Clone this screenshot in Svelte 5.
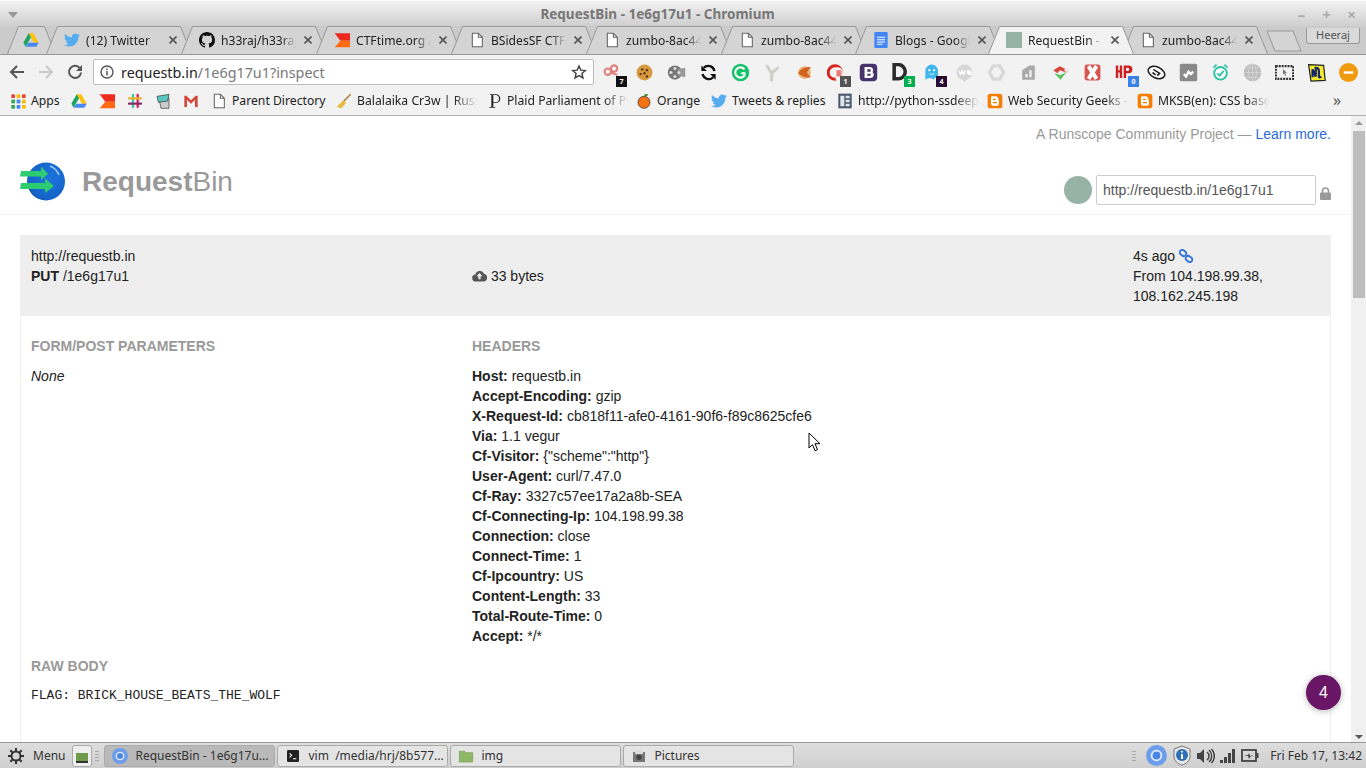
<script lang="ts">
  const twitter = '<path fill="#55acee" d="M23.95 4.57a10 10 0 01-2.82.77 4.96 4.96 0 002.16-2.72c-.95.55-2 .96-3.13 1.18a4.92 4.92 0 00-8.38 4.48C7.69 8.1 4.07 6.13 1.64 3.16a4.92 4.92 0 001.52 6.57 4.9 4.9 0 01-2.23-.61v.06a4.92 4.92 0 003.95 4.83 4.9 4.9 0 01-2.22.08 4.93 4.93 0 004.6 3.42A9.87 9.87 0 010 19.54a13.94 13.94 0 007.55 2.21c9.06 0 14-7.5 14-14 0-.21 0-.42-.02-.63a10 10 0 002.46-2.55z"/>';
  const github = '<path transform="scale(1.5)" fill="#111" d="M8 0C3.58 0 0 3.58 0 8c0 3.54 2.29 6.53 5.47 7.59.4.07.55-.17.55-.38 0-.19-.01-.82-.01-1.49-2.01.37-2.53-.49-2.69-.94-.09-.23-.48-.94-.82-1.13-.28-.15-.68-.52-.01-.53.63-.01 1.08.58 1.23.82.72 1.21 1.87.87 2.33.66.07-.52.28-.87.51-1.07-1.78-.2-3.64-.89-3.64-3.95 0-.87.31-1.59.82-2.15-.08-.2-.36-1.02.08-2.12 0 0 .67-.21 2.2.82.64-.18 1.32-.27 2-.27s1.36.09 2 .27c1.53-1.04 2.2-.82 2.2-.82.44 1.1.16 1.92.08 2.12.51.56.82 1.27.82 2.15 0 3.07-1.87 3.75-3.65 3.95.29.25.54.73.54 1.48 0 1.07-.01 1.93-.01 2.2 0 .21.15.46.55.38A8.01 8.01 0 0016 8c0-4.42-3.58-8-8-8z"/>';
  const drive = '<path fill="#ffc107" d="M8.5 2h7l8 14h-7z"/><path fill="#1fa463" d="M8.5 2l3.5 6-8 14-3.5-6z"/><path fill="#4688f4" d="M8 16h15.500l-3.500 6H4z"/>';
  const ctf = '<path fill="#ee2a1e" d="M1 2h23v11H9.500z"/><path fill="#ff6a13" d="M1 23h23V13H9.500z"/>';
  const doc = '<path fill="#fff" stroke="#666" stroke-width="1.600" d="M5 2h9l6 6v14H5z"/><path fill="none" stroke="#666" stroke-width="1.600" d="M14 2v6h6"/>';
  const gdoc = '<rect x="2" width="20" height="24" rx="1.500" fill="#4285f4"/><path stroke="#fff" stroke-width="1.600" d="M6 8h12M6 11.500h12M6 15h12M6 18.500h8"/>';
  const bin = '<rect width="24" height="24" fill="#97b3a8"/>';

  const tabs = [
    { title: '', icon: drive },
    { title: '(12) Twitter', icon: twitter },
    { title: 'h33raj/h33raj', icon: github },
    { title: 'CTFtime.org / BSides', icon: ctf },
    { title: 'BSidesSF CTF', icon: doc },
    { title: 'zumbo-8ac445b', icon: doc },
    { title: 'zumbo-8ac445b', icon: doc },
    { title: 'Blogs - Google', icon: gdoc, tight: true },
    { title: 'RequestBin - 1e', icon: bin, active: true },
    { title: 'zumbo-8ac445b', icon: doc, tight: true },
  ];

  const appColors = ['#ea4335', '#fbbc05', '#ea4335', '#34a853', '#4285f4', '#fbbc05', '#34a853', '#4285f4', '#fbbc05'];
  const apps = appColors
    .map((c, i) => `<rect x="${2 + (i % 3) * 8}" y="${2 + Math.floor(i / 3) * 8}" width="5.500" height="5.500" fill="${c}"/>`)
    .join('');
  const slack = '<path stroke-width="3.400" stroke-linecap="round" d="M9 3v18" stroke="#36c5ab"/><path stroke-width="3.400" stroke-linecap="round" d="M16 3v18" stroke="#e01e5a"/><path stroke-width="3.400" stroke-linecap="round" d="M3 8h18" stroke="#ecb22e"/><path stroke-width="3.400" stroke-linecap="round" d="M3 16h18" stroke="#8a2a6a"/>';
  const book = '<path fill="#ccc" stroke="#333" d="M6 8h15v15H9z"/><path fill="#5cc5c0" stroke="#333" d="M3 5l18-3-2 10-14 2z"/>';
  const gmail = '<path fill="#d44638" d="M2 4h3l7 7 7-7h3v17h-4V10l-6 6-6-6v11H2z"/>';
  const broom = '<path stroke="#a5752a" stroke-width="2" d="M22 2L10 14"/><path fill="#e8b93c" d="M11 11l4 4-7 8-7-2z"/>';
  const plaid = '<path fill="#222" d="M6 2h9a6 6 0 010 13h-4v6h3v1H5v-1h3V3H6zm5 1v11h3a5 5 0 000-11z"/>';
  const orange = '<circle cx="12" cy="14" r="9" fill="#f47216" stroke="#222"/><path fill="#3a8a2a" d="M12 5c0-3 3-4 6-3-1 3-3 4-6 3z"/>';
  const python = '<rect x="2" y="1" width="20" height="22" fill="#46586a"/><path fill="#dfe6ea" d="M5 4h6v16H5zM13 4h6v4h-6zM13 10h6v4h-6zM13 16h6v4h-6z"/>';
  const blogger = '<rect x="1" y="1" width="22" height="22" rx="4" fill="#f57d00"/><path fill="#fff" d="M8 5h5a4 4 0 014 4v1a1 1 0 001 1v5a3 3 0 01-3 3H9a3 3 0 01-3-3V7a2 2 0 012-2z"/><path stroke="#f57d00" stroke-width="2" d="M9 9.500h4M9 14.500h6"/>';

  const bookmarks = [
    { icon: apps, label: 'Apps', width: 61 },
    { icon: drive, label: '', width: 28 },
    { icon: ctf, label: '', width: 28 },
    { icon: slack, label: '', width: 28 },
    { icon: book, label: '', width: 28 },
    { icon: gmail, label: '', width: 28 },
    { icon: doc, label: 'Parent Directory', width: 125 },
    { icon: broom, label: 'Balalaika Cr3w | Russian', width: 150, fade: true },
    { icon: plaid, label: 'Plaid Parliament of Pwning', width: 150, fade: true },
    { icon: orange, label: 'Orange', width: 75 },
    { icon: twitter, label: 'Tweets & replies', width: 126 },
    { icon: python, label: 'http://python-ssdeep', width: 150, fade: true },
    { icon: blogger, label: 'Web Security Geeks - Blog', width: 150, fade: true },
    { icon: blogger, label: 'MKSB(en): CSS based', width: 140, fade: true },
  ];

  const extensions = [
    { svg: '<circle cx="14" cy="7" r="4" fill="none" stroke="#e07f7c" stroke-width="2.600"/><circle cx="6" cy="11" r="4" fill="none" stroke="#e07f7c" stroke-width="2.600"/><path stroke="#e07f7c" stroke-width="2.600" d="M10 12l8 3"/>', badge: '7', bg: '#111' },
    { svg: '<circle cx="12" cy="12" r="10" fill="#d9993f"/><circle cx="9" cy="8" r="1.500" fill="#5a3313"/><circle cx="15" cy="9" r="1.500" fill="#5a3313"/><circle cx="7" cy="14" r="1.500" fill="#5a3313"/><circle cx="12" cy="13" r="1.500" fill="#5a3313"/><circle cx="15" cy="17" r="1.500" fill="#5a3313"/>' },
    { svg: '<circle cx="10" cy="12" r="9" fill="#777"/><path fill="#999" d="M14 8l9-2v12l-9-2z"/><circle cx="10" cy="7" r="2" fill="#ddd"/><circle cx="5" cy="12" r="2" fill="#ddd"/><circle cx="15" cy="12" r="2" fill="#ddd"/><circle cx="10" cy="17" r="2" fill="#ddd"/>' },
    { svg: '<path fill="none" stroke="#111" stroke-width="3" d="M19.500 10a8 8 0 00-13.500-4M4.500 14a8 8 0 0013.500 4"/><path fill="#111" d="M3 3v7h7zM21 21v-7h-7z"/>' },
    { svg: '<circle cx="12" cy="12" r="11" fill="#15c26b"/><path fill="none" stroke="#fff" stroke-width="2.600" d="M17 8a6.500 6.500 0 100 8v-3h-4"/>' },
    { svg: '<path fill="#cfcfc8" d="M3 3l3-1 5 8 8-6 2 2-8 8v9h-4v-9z"/>' },
    { svg: '<circle cx="12" cy="12" r="8" fill="#eeb27a"/><path fill="#d0641f" d="M4 13c3-6 9-8 16-8l-5 7 5 6c-6 1-12-1-16-5z"/>' },
    { svg: '<circle cx="10" cy="12" r="8.500" fill="none" stroke="#d9231f" stroke-width="3.800"/><path fill="#f4f4f4" d="M11 6c4-2 9 1 9 6v10h-9z"/><path fill="#e77" d="M12 9h6v8h-6z"/>', badge: '1', bg: '#555' },
    { svg: '<rect x="1" y="1" width="22" height="22" rx="5" fill="#46336b"/><path fill="#fff" fill-rule="evenodd" d="M7 5h7a4 4 0 013 6.500A4.200 4.200 0 0114 19H7zm3.500 3v3h3a1.500 1.500 0 000-3zm0 5.500V16h3.500a1.300 1.300 0 000-2.500z"/>' },
    { svg: '<path fill="none" stroke="#2b2b2b" stroke-width="4.500" d="M4 2h5a9 9 0 010 18H4z"/>', badge: '3', bg: '#00b050' },
    { svg: '<path fill="#3fb6ec" d="M3 21V10a8 8 0 0116 0v8c-2 0-4 1-6 3-1-1-2-2-4-2s-4 1-6 2z"/><circle cx="8" cy="9" r="1.400" fill="#fff"/><circle cx="14" cy="9" r="1.400" fill="#fff"/><path stroke="#fff" fill="none" d="M8 13c2 2 4 2 6 0"/>', badge: '4', bg: '#2a0a33' },
    { svg: '<path fill="#d6d6d6" d="M12 2a10 10 0 0110 10 10 10 0 01-7 9l-3 3-3-3a10 10 0 01-7-9A10 10 0 0112 2z"/><path stroke="#fff" stroke-width="2" fill="none" d="M5 10l2 4 2-4 2 4 2-4M20 10h-4v2h4v2h-4"/>' },
    { svg: '<path fill="none" stroke="#d8d8d8" stroke-width="4" d="M8 3.500h8l5 8.500-5 8.500H8L3 12z"/>' },
    { svg: '<path fill="#aaa" d="M4 9l9-6h7v18H4z"/><path fill="#f2f2f2" d="M8 14h3v4H8zM13 9h3v9h-3z"/>' },
    { svg: '<path fill="#5cc464" d="M4 13l8 2 8-4-8 10z"/><path fill="#d9453d" d="M3 9l8-5 11 5-3 3-8-3-3 4z"/><circle cx="19" cy="9" r="2" fill="#f2f2f2"/>' },
    { svg: '<rect x="2" y="2" width="20" height="20" rx="3" fill="#d9534f"/><path stroke="#fff" stroke-width="5" d="M7 4l10 16M17 4L7 20"/>' },
    { svg: '<path fill="#cc1f1f" d="M1 3h3v6h2V3h3v16H6v-7H4v7H1zM11 3h6a4.500 4.500 0 010 10h-3v6h-3zm3 3v4h2a2 2 0 000-4z"/>', badge: '0', bg: '#3b82e8' },
    { svg: '<ellipse cx="12" cy="12" rx="11" ry="7" fill="#fff" stroke="#222" stroke-width="2" transform="rotate(25 12 12)"/><path stroke="#222" stroke-width="2" fill="none" d="M8 8l8 5-3 3M7 12l4 3"/>' },
    { svg: '<rect x="1" y="1" width="22" height="22" rx="2" fill="#8a8a8a"/><path fill="none" stroke="#fff" stroke-width="3" d="M6 14l3 3 3-6 3 3 3-3"/>' },
    { svg: '<circle cx="12" cy="13" r="8" fill="#fff" stroke="#2cc3a5" stroke-width="2.400"/><path stroke="#2cc3a5" stroke-width="2.200" fill="none" d="M8 13l3 3 5-6M3 6l4-4M21 6l-4-4"/>' },
    { svg: '<circle cx="12" cy="12" r="11" fill="#bcbcbc"/><path stroke="#d8d8d8" fill="none" d="M1 12h22M12 1v22M4 6h16M4 18h16"/><ellipse cx="12" cy="12" rx="5" ry="11" fill="none" stroke="#d8d8d8"/>' },
    { svg: '<rect x="1" y="4" width="22" height="16" fill="#f2f2f2" stroke="#333" stroke-width="2.800" stroke-dasharray="2.500 1.200"/><path fill="#777" d="M10 8l5 4-2 .500 1 3-1.500.500-1-3-1.500 1.500z"/>' },
    { svg: '<path fill="#f5ea2e" stroke="#222" stroke-width="1.500" d="M2 2l19 1 2 19-18 1z"/><path fill="none" stroke="#14276b" stroke-width="2.800" d="M7 18V8l4 9V6c2 0 4 1 4 4v7c0 2 2 1 3 0"/>' },
    { svg: '<circle cx="12" cy="12" r="12" fill="#f09a0e"/><rect x="6" y="10.500" width="12" height="3" fill="#fff"/>' },
  ];

  const headers: [string, string][] = [
    ['Host', 'requestb.in'],
    ['Accept-Encoding', 'gzip'],
    ['X-Request-Id', 'cb818f11-afe0-4161-90f6-f89c8625cfe6'],
    ['Via', '1.1 vegur'],
    ['Cf-Visitor', '{"scheme":"http"}'],
    ['User-Agent', 'curl/7.47.0'],
    ['Cf-Ray', '3327c57ee17a2a8b-SEA'],
    ['Cf-Connecting-Ip', '104.198.99.38'],
    ['Connection', 'close'],
    ['Connect-Time', '1'],
    ['Cf-Ipcountry', 'US'],
    ['Content-Length', '33'],
    ['Total-Route-Time', '0'],
    ['Accept', '*/*'],
  ];

  const chromium = '<circle cx="12" cy="12" r="12" fill="#6d9eeb"/><circle cx="12" cy="12" r="6.500" fill="#e8f0fe"/><circle cx="12" cy="12" r="4.500" fill="#4a86e8"/>';
  const windows = [
    { label: 'RequestBin - 1e6g17u...', icon: chromium, active: true },
    { label: 'vim  /media/hrj/8b577...', icon: '<rect x="3" y="3" width="18" height="18" rx="2" fill="#222"/><path stroke="#fff" stroke-width="1.600" fill="none" d="M7 8l3 3-3 3M12 16h5"/>' },
    { label: 'img', icon: '<path fill="#8fb866" stroke="#7a9a58" d="M2 5h8l2 2h10v14H2z"/>' },
    { label: 'Pictures', icon: '<rect x="3" y="6" width="18" height="15" fill="#777"/><rect x="6" y="3" width="12" height="6" fill="#ddd"/><circle cx="12" cy="14" r="4" fill="#444"/>' },
  ];
</script>

<div class="desktop">
  <header class="titlebar">
    <span class="menu-caret"></span>
    <span class="title">RequestBin - 1e6g17u1 - Chromium</span>
    <div class="win-controls"><span>–</span><span>+</span><span>×</span></div>
  </header>

  <div class="tabstrip">
    {#each tabs as tab, i}
      {@const w = i === 0 ? 49 : 146}
      <div class="tab" class:active={tab.active} class:tight={tab.tight} class:first={i === 0}>
        <svg class="tab-bg" width={w} height="28" viewBox="0 0 {w} 28">
          <path d="M0.5 28 L11.500 0.500 H{w - 11.500} L{w - 0.500} 28" />
        </svg>
        <svg class="favicon" width="16" height="16" viewBox="0 0 24 24">{@html tab.icon}</svg>
        {#if tab.title}
          <span class="tab-title">{tab.title}</span>
          <svg class="tab-close" width="8" height="8" viewBox="0 0 8 8"><path d="M0.500 0.500l7 7M7.500 0.500l-7 7" /></svg>
        {/if}
      </div>
    {/each}
    <svg class="new-tab" width="36" height="22" viewBox="0 0 36 22"><path d="M1 1h26l8 20H9z" /></svg>
    <span class="profile">Heeraj</span>
  </div>

  <div class="toolbar">
    <div class="nav">
      <svg width="16" height="16" viewBox="0 0 16 16"><path class="nav-arrow" d="M15 8H2M8 2L2 8l6 6" /></svg>
      <svg width="16" height="16" viewBox="0 0 16 16"><path class="nav-arrow off" d="M1 8h13M8 2l6 6-6 6" /></svg>
      <svg width="16" height="16" viewBox="0 0 16 16"><path class="nav-arrow" d="M13 4.500A6 6 0 1 0 14 8.500" /><path fill="#555" d="M15 1v6H9z" /></svg>
    </div>
    <div class="omnibox">
      <svg width="14" height="14" viewBox="0 0 14 14"><circle cx="7" cy="7" r="6" fill="none" stroke="#555" stroke-width="1.400"/><path stroke="#555" stroke-width="1.500" d="M7 6v4.500M7 3.500v1.500"/></svg>
      <span class="url"><b>requestb.in</b>/1e6g17u1?inspect</span>
      <svg class="star" width="16" height="16" viewBox="0 0 24 24"><path fill="none" stroke="#444" stroke-width="2.200" d="M12 3l2.700 6.200 6.800.6-5.100 4.500 1.500 6.700L12 17.500 6.100 21l1.500-6.700L2.500 9.800l6.800-.6z"/></svg>
    </div>
    <div class="extensions">
      {#each extensions as ext}
        <span class="ext">
          <svg width="19" height="19" viewBox="0 0 24 24">{@html ext.svg}</svg>
          {#if ext.badge}<span class="ext-badge" style="background: {ext.bg}">{ext.badge}</span>{/if}
        </span>
      {/each}
    </div>
  </div>

  <div class="bookmarks">
    {#each bookmarks as mark}
      <div class="mark" style="width: {mark.width}px">
        <svg width="16" height="16" viewBox="0 0 24 24">{@html mark.icon}</svg>
        {#if mark.label}<span class="mark-label" class:fade={mark.fade}>{mark.label}</span>{/if}
      </div>
    {/each}
    <span class="more">»</span>
  </div>

  <div class="viewport">
    <main class="page">
      <div class="page-header">
        <p class="tagline">A Runscope Community Project — <a href="#top">Learn more.</a></p>
        <div class="brand-row">
          <div class="brand">
            <svg width="46" height="40" viewBox="0 0 46 40">
              <defs>
                <radialGradient id="ball" cx="0.600" cy="0.400" r="0.700">
                  <stop offset="0" stop-color="#1d74dc" />
                  <stop offset="0.800" stop-color="#1463c8" />
                  <stop offset="1" stop-color="#0d4da0" />
                </radialGradient>
              </defs>
              <circle cx="26" cy="19.500" r="19" fill="url(#ball)" />
              <path d="M30 4a16 16 0 0 1 9 9" fill="none" stroke="#9cc6f2" stroke-width="1.500" />
              <path fill="#2ecc71" d="M1 9h20V4.500L28 12l-7 6v-3.500H0zM1 21h24v-4.500L34 24l-9 7v-4H0z" />
            </svg>
            <h1><strong>Request</strong>Bin</h1>
          </div>
          <div class="bin-url">
            <span class="bin-color"></span>
            <input class="bin-input" value="http://requestb.in/1e6g17u1" readonly />
            <svg class="lock" width="11" height="13" viewBox="0 0 11 13"><path fill="none" stroke="#999" stroke-width="1.600" d="M2.500 6V4a3 3 0 016 0v2"/><rect y="5.500" width="11" height="7.500" rx="1" fill="#999"/></svg>
          </div>
        </div>
      </div>

      <section class="request">
        <div class="summary">
          <div>
            <div>http://requestb.in</div>
            <div><b>PUT</b> /1e6g17u1</div>
          </div>
          <div class="size">
            <svg width="15" height="12" viewBox="0 0 15 12"><path fill="#555" d="M4 11.500a3.500 3.500 0 01-.6-7A4.500 4.500 0 0112 3.800a3.900 3.900 0 01-.5 7.700z"/><path fill="#eee" d="M7.500 3l3 3.300H8.600v3H6.400v-3H4.500z"/></svg>
            33 bytes
          </div>
          <div>
            <div>4s ago
              <svg class="chain" width="14" height="14" viewBox="0 0 14 14"><g fill="none" stroke="#2f73d8" stroke-width="1.800"><rect x="0.500" y="1.500" width="7" height="5" rx="2.500" transform="rotate(40 4 4)"/><rect x="6.500" y="7.500" width="7" height="5" rx="2.500" transform="rotate(40 10 10)"/></g></svg>
            </div>
            <div>From 104.198.99.38,</div>
            <div>108.162.245.198</div>
          </div>
        </div>
        <div class="details">
          <div class="params">
            <h5>FORM/POST PARAMETERS</h5>
            <p><em>None</em></p>
          </div>
          <div class="headers">
            <h5>HEADERS</h5>
            {#each headers as [name, value]}
              <div><b>{name}:</b> {value}</div>
            {/each}
          </div>
        </div>
        <div class="raw">
          <h5>RAW BODY</h5>
          <pre>FLAG: BRICK_HOUSE_BEATS_THE_WOLF</pre>
        </div>
      </section>

      <span class="chat-bubble">4</span>
      <svg class="cursor" width="14" height="20" viewBox="0 0 14 20"><path fill="#fff" stroke="#000" d="M1 1v15l3.500-3.300 2.500 6 2.500-1-2.500-6h5z"/></svg>
    </main>
    <div class="scrollbar">
      <span class="arrow up"></span>
      <span class="thumb"></span>
      <span class="arrow down"></span>
    </div>
  </div>

  <footer class="panel">
    <svg class="gear" width="16" height="16" viewBox="0 0 16 16"><circle cx="8" cy="8" r="4.500" fill="none" stroke="#333" stroke-width="2"/><path stroke="#333" stroke-width="2" d="M8 0v3M8 13v3M0 8h3M13 8h3M2.300 2.300l2 2M11.700 11.700l2 2M13.700 2.300l-2 2M4.300 11.700l-2 2"/></svg>
    <span class="menu-label">Menu</span>
    <span class="show-desktop"><span></span></span>
    <span class="grip"></span>
    <div class="window-list">
      {#each windows as win}
        <div class="window" class:active={win.active}>
          <svg width="16" height="16" viewBox="0 0 24 24">{@html win.icon}</svg>
          <span>{win.label}</span>
        </div>
      {/each}
    </div>
    <div class="tray">
      <span class="grip"></span>
      <svg width="21" height="21" viewBox="0 0 24 24">{@html chromium}</svg>
      <svg width="20" height="21" viewBox="0 0 20 21"><path fill="#e8e8e8" stroke="#777" d="M10 1l8 3v7c0 5-4 8-8 9-4-1-8-4-8-9V4z"/><circle cx="10" cy="10" r="6" fill="#2f6fb5"/><path stroke="#fff" stroke-width="2" d="M10 9v5M10 6v1.500"/></svg>
      <svg width="18" height="16" viewBox="0 0 18 16"><path fill="#444" d="M0 5h3l4-4v14l-4-4H0z"/><path fill="none" stroke="#444" stroke-width="1.500" d="M10 4a5 5 0 010 8M12 2a8 8 0 010 12M14.500 1a10 10 0 010 14"/></svg>
      <svg width="16" height="14" viewBox="0 0 16 14"><path fill="#444" d="M0 11h3v3H0zM4 8h3v6H4zM8 4h3v10H8zM12 0h3v14h-3z"/></svg>
      <svg width="18" height="13" viewBox="0 0 18 13"><rect x="1" y="1" width="14" height="11" fill="none" stroke="#444" stroke-width="1.800"/><rect x="15.500" y="4" width="2" height="5" fill="#444"/><path fill="#444" d="M3 7l4-1 1-2 1 3 4-1-4 2-1 2-1-3z"/></svg>
      <span class="clock">Fri Feb 17, 13:42</span>
    </div>
  </footer>
</div>

<style>
  :global(body) {
    margin: 0;
    overflow: hidden;
  }

  .desktop {
    width: 1366px;
    height: 768px;
    display: flex;
    flex-direction: column;
    font-family: 'Noto Sans', 'Open Sans', sans-serif;
    color: #222;
    overflow: hidden;
  }

  /* Window title */
  .titlebar {
    position: relative;
    height: 26px;
    flex: none;
    display: flex;
    align-items: center;
    justify-content: center;
    background: linear-gradient(#f2f2f2, #cfcfcf);
    border-top: 1px solid #fafafa;
    box-sizing: border-box;
  }

  .title {
    margin-right: 51px;
    font-size: 13.500px;
    font-weight: 700;
    color: #777;
  }

  .menu-caret {
    position: absolute;
    left: 8px;
    top: 11px;
    border: 5px solid transparent;
    border-top: 6px solid #999;
    border-bottom: 0;
  }

  .win-controls {
    position: absolute;
    right: 2px;
    top: 4px;
    display: flex;
    font-size: 15px;
    line-height: 18px;
    font-weight: 700;
    color: #aaa;
  }

  .win-controls span {
    width: 25px;
    text-align: center;
  }

  /* Tabs */
  .tabstrip {
    position: relative;
    height: 28px;
    flex: none;
    display: flex;
    padding-left: 7px;
    background: #cbcbcb;
    border-bottom: 1px solid #999;
  }

  .tab {
    position: relative;
    width: 146px;
    height: 28px;
    margin-left: -11px;
    flex: none;
    display: flex;
    align-items: center;
    padding: 0 15px 0 18px;
    box-sizing: border-box;
    font-size: 12.100px;
    color: #222;
  }

  .tab.first {
    width: 49px;
    margin-left: 0;
    padding: 0 0 0 16px;
    margin-right: 1px;
  }

  .tab.tight {
    margin-left: -12px;
  }

  .tab.active {
    margin-left: -13px;
    z-index: 2;
  }

  .tab-bg {
    position: absolute;
    left: 0;
    top: 0;
  }

  .tab-bg path {
    fill: #d4d4d4;
    stroke: #999;
  }

  .tab.active .tab-bg path {
    fill: #f2f2f2;
  }

  .favicon {
    position: relative;
    flex: none;
  }

  .tab-title {
    position: relative;
    flex: 1;
    margin-left: 6px;
    white-space: nowrap;
    overflow: hidden;
    mask-image: linear-gradient(to right, #000 80%, transparent 100%);
  }

  .tab-close {
    position: relative;
    flex: none;
    margin-left: 8px;
  }

  .tab-close path {
    stroke: #555;
    stroke-width: 1.600;
  }

  .new-tab {
    margin: 4px 0 0 -2px;
    flex: none;
  }

  .new-tab path {
    fill: #d4d4d4;
    stroke: #999;
  }

  .profile {
    position: absolute;
    right: 6px;
    top: 2px;
    height: 15px;
    width: 52px;
    border: 1px solid #999;
    border-top: 0;
    border-radius: 0 0 3px 3px;
    background: #dadada;
    font-size: 11px;
    line-height: 14px;
    text-align: center;
    color: #555;
  }

  /* Toolbar */
  .toolbar {
    height: 33px;
    flex: none;
    display: flex;
    align-items: center;
    box-sizing: border-box;
    padding-top: 1px;
    background: #f2f2f2;
  }

  .nav {
    width: 93px;
    flex: none;
    display: flex;
    gap: 13px;
    padding-left: 9px;
    box-sizing: border-box;
  }

  .nav-arrow {
    fill: none;
    stroke: #555;
    stroke-width: 2;
  }

  .nav-arrow.off {
    stroke: #c8c8c8;
  }

  .omnibox {
    width: 501px;
    height: 26px;
    flex: none;
    display: flex;
    align-items: center;
    gap: 7px;
    padding: 0 6px;
    box-sizing: border-box;
    background: #fff;
    border: 1px solid #bbb;
    border-radius: 2px;
  }

  .url {
    flex: 1;
    font-size: 14.350px;
    color: #777;
  }

  .url b {
    font-weight: 400;
    color: #222;
  }

  .extensions {
    display: flex;
    margin-left: 2px;
  }

  .ext {
    position: relative;
    width: 32px;
    height: 24px;
    display: flex;
    align-items: center;
    justify-content: center;
  }

  .ext-badge {
    position: absolute;
    right: 1px;
    bottom: -3px;
    min-width: 11px;
    height: 11px;
    font-size: 7px;
    line-height: 11px;
    text-align: center;
    color: #fff;
    font-weight: 700;
  }

  /* Bookmarks */
  .bookmarks {
    position: relative;
    height: 28px;
    flex: none;
    display: flex;
    align-items: center;
    padding: 0 0 2px 10px;
    box-sizing: border-box;
    background: #f2f2f2;
    border-bottom: 1px solid #b0b0b0;
    font-size: 12.200px;
  }

  .mark {
    flex: none;
    display: flex;
    align-items: center;
    gap: 5px;
    box-sizing: border-box;
    padding-right: 8px;
    overflow: hidden;
    white-space: nowrap;
  }

  .mark svg {
    flex: none;
  }

  .mark-label.fade {
    flex: 1;
    overflow: hidden;
    mask-image: linear-gradient(to right, #000 80%, transparent 100%);
  }

  .more {
    position: absolute;
    left: 1333px;
    top: 1px;
    font-size: 16px;
    color: #555;
  }

  /* Page content */
  .viewport {
    flex: 1;
    min-height: 0;
    display: flex;
    background: #fff;
  }

  .page {
    position: relative;
    flex: 1;
    min-width: 0;
    overflow: hidden;
    font-family: 'Liberation Sans', Arial, sans-serif;
    font-size: 14px;
    line-height: 20px;
    color: #222;
    background: #fff;
  }

  .page-header {
    padding: 8px 20px 0;
    height: 99px;
    box-sizing: border-box;
    border-bottom: 1px solid #f2f2f2;
  }

  .tagline {
    margin: 0;
    text-align: right;
    color: #999;
  }

  .tagline a {
    color: #2a6bd9;
    text-decoration: none;
  }

  .brand-row {
    display: flex;
    justify-content: space-between;
    margin-top: 16px;
  }

  .brand {
    display: flex;
    align-items: center;
    gap: 16px;
    align-self: flex-start;
    margin-top: 2px;
  }

  .brand h1 {
    margin: 0;
    font-size: 28px;
    line-height: 40px;
    font-weight: 400;
    color: #999;
  }

  .bin-url {
    display: flex;
    align-items: center;
    margin-top: 15px;
    height: 30px;
  }

  .bin-color {
    width: 28px;
    height: 28px;
    margin-right: 4px;
    border-radius: 50%;
    background: #97b3a8;
  }

  .bin-input {
    width: 220px;
    height: 30px;
    padding: 0 6px;
    box-sizing: border-box;
    border: 1px solid #ccc;
    border-radius: 2px;
    font: 14px 'Liberation Sans', Arial, sans-serif;
    color: #555;
    outline: none;
  }

  .lock {
    margin: 6px 0 0 4px;
  }

  .request {
    margin: 20px 20px 0;
    border: 1px solid #eee;
    border-top: 0;
    border-radius: 2px 2px 0 0;
    min-height: 520px;
  }

  .summary {
    display: grid;
    grid-template-columns: 441px 661px 1fr;
    height: 81px;
    padding: 11px 11px 0;
    box-sizing: border-box;
    background: #eee;
    margin: 0 -1px;
  }

  .size {
    margin-top: 20px;
  }

  .size svg {
    vertical-align: -1px;
  }

  .chain {
    vertical-align: -2px;
  }

  .details {
    display: grid;
    grid-template-columns: 441px 1fr;
    padding: 20px 10px 0;
  }

  h5 {
    margin: 0 0 10px;
    font-size: 14px;
    line-height: 20px;
    font-weight: 700;
    color: #999;
  }

  .params p {
    margin: 0;
  }

  .raw {
    padding: 10px 10px 0;
  }

  .raw pre {
    margin: 0;
    font: 13px/20px 'Liberation Mono', 'Courier New', monospace;
    color: #222;
  }

  .chat-bubble {
    position: absolute;
    left: 1306px;
    top: 559px;
    width: 35px;
    height: 35px;
    border-radius: 50%;
    background: #6a1666;
    box-shadow: 0 1px 6px rgba(0, 0, 0, 0.3);
    color: #fff;
    font-size: 16px;
    line-height: 35px;
    text-align: center;
  }

  .cursor {
    position: absolute;
    left: 808px;
    top: 316px;
  }

  /* Scrollbar */
  .scrollbar {
    position: relative;
    width: 15px;
    flex: none;
    background: #f0f0f0;
  }

  .thumb {
    position: absolute;
    left: 2px;
    right: 1px;
    top: 15px;
    height: 167px;
    background: #bdbdbd;
  }

  .arrow {
    position: absolute;
    left: 4px;
    border: 4px solid transparent;
  }

  .arrow.up {
    top: 5px;
    border-bottom: 4px solid #999;
    border-top: 0;
  }

  .arrow.down {
    bottom: 3px;
    border-top: 4px solid #555;
    border-bottom: 0;
  }

  /* Desktop panel */
  .panel {
    height: 26px;
    flex: none;
    display: flex;
    align-items: center;
    padding-left: 8px;
    box-sizing: border-box;
    background: linear-gradient(#dedede, #cfcfcf);
    border-top: 1px solid #9a9a9a;
    font-size: 12px;
    color: #333;
  }

  .menu-label {
    margin-left: 9px;
  }

  .show-desktop {
    width: 20px;
    height: 22px;
    margin-left: 7px;
    padding: 3px;
    box-sizing: border-box;
    border: 1px solid #aaa;
    border-radius: 3px;
    background: #eee;
  }

  .show-desktop span {
    display: block;
    height: 100%;
    background: linear-gradient(#eee 25%, #6f9a4a 25%, #6f9a4a 85%, #333 85%);
  }

  .grip {
    width: 4px;
    height: 10px;
    margin: 0 5px 0 3px;
    background: repeating-linear-gradient(#aaa 0 1px, transparent 1px 3px);
  }

  .window-list {
    display: flex;
    gap: 2px;
  }

  .window {
    width: 171px;
    height: 22px;
    display: flex;
    align-items: center;
    gap: 7px;
    padding-left: 7px;
    box-sizing: border-box;
    background: #e4e4e4;
    border: 1px solid #aaa;
    border-radius: 3px;
    white-space: pre;
  }

  .window.active {
    background: #b9b9b9;
  }

  .tray {
    margin-left: auto;
    display: flex;
    align-items: center;
    gap: 5px;
    padding-right: 4px;
  }

  .clock {
    margin-left: 6px;
  }
</style>
